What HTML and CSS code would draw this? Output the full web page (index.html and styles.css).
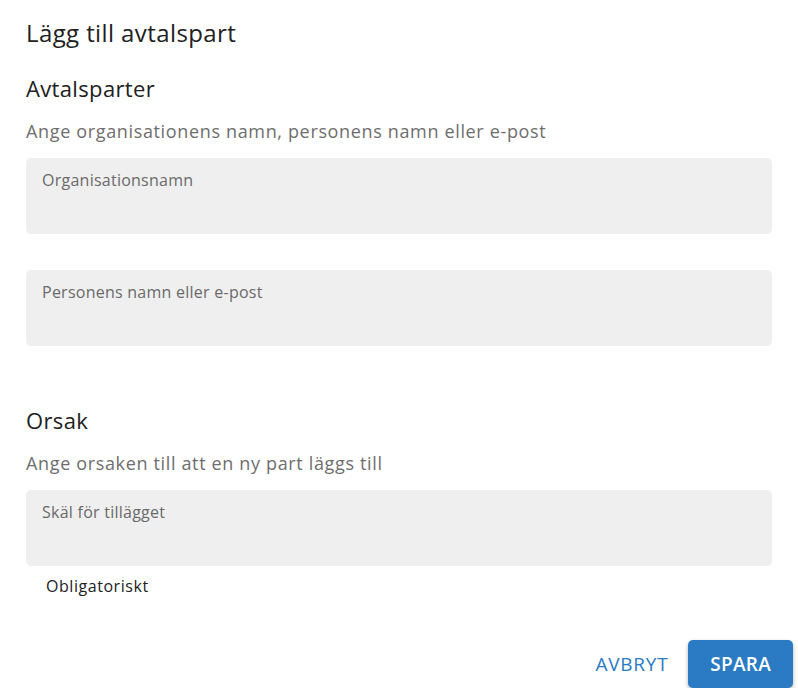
FILE: index.html
```html
<!DOCTYPE html>
<html lang="sv">
<head>
<meta charset="utf-8">
<title>Lägg till avtalspart</title>
<link rel="stylesheet" href="styles.css">
</head>
<body>
<div class="dialog">
  <h1 class="title">Lägg till avtalspart</h1>
  <h2 class="section">Avtalsparter</h2>
  <p class="hint">Ange organisationens namn, personens namn eller e-post</p>
  <div class="field"><span class="label">Organisationsnamn</span></div>
  <div class="field field-gap"><span class="label">Personens namn eller e-post</span></div>
  <h2 class="section section-orsak">Orsak</h2>
  <p class="hint">Ange orsaken till att en ny part läggs till</p>
  <div class="field"><span class="label">Skäl för tillägget</span></div>
  <div class="helper">Obligatoriskt</div>
  <div class="actions">
    <button class="btn btn-text">AVBRYT</button>
    <button class="btn btn-primary">SPARA</button>
  </div>
</div>
</body>
</html>
```
FILE: styles.css
```css
html, body {
  margin: 0;
  padding: 0;
  background: #ffffff;
}
body {
  font-family: "Open Sans", "Liberation Sans", sans-serif;
  color: #212121;
}
.dialog {
  padding: 18px 26px 0 26px;
  width: 746px;
}
.title {
  margin: 0;
  font-size: 24px;
  line-height: 30px;
  font-weight: 400;
  letter-spacing: 0.4px;
  color: #212121;
}
.section {
  margin: 26px 0 0 0;
  font-size: 22px;
  line-height: 28px;
  font-weight: 400;
  letter-spacing: 0.35px;
  color: #212121;
}
.section-orsak {
  margin-top: 60px;
}
.hint {
  margin: 16px 0 0 0;
  font-size: 18px;
  line-height: 26px;
  letter-spacing: 0.65px;
  color: #6e6e6e;
}
.field {
  margin-top: 14px;
  height: 76px;
  box-sizing: border-box;
  background: #efefef;
  border-radius: 5px;
  padding: 11px 16px 0 16px;
}
.field-gap {
  margin-top: 36px;
}
.label {
  display: block;
  font-size: 16px;
  line-height: 22px;
  letter-spacing: 0.25px;
  color: #6a6a6a;
}
.helper {
  margin-top: 9px;
  padding-left: 20px;
  font-size: 16px;
  line-height: 22px;
  letter-spacing: 0.55px;
  color: #212121;
}
.actions {
  display: flex;
  justify-content: flex-end;
  align-items: center;
  gap: 6px;
  margin-top: 43px;
  margin-right: -21px;
}
.btn {
  font-family: "Open Sans", "Liberation Sans", sans-serif;
  font-size: 19px;
  font-weight: 600;
  letter-spacing: 0.25px;
  height: 48px;
  border: none;
  border-radius: 5px;
  padding: 0 22px;
  cursor: pointer;
}
.btn-text {
  background: transparent;
  color: #2b7bc4;
  padding: 0 14px 0 16px;
  font-weight: 500;
  letter-spacing: 0.75px;
}
.btn-primary {
  background: #2b7bc4;
  color: #ffffff;
  box-shadow: 0 2px 4px rgba(0,0,0,0.3);
}
```
